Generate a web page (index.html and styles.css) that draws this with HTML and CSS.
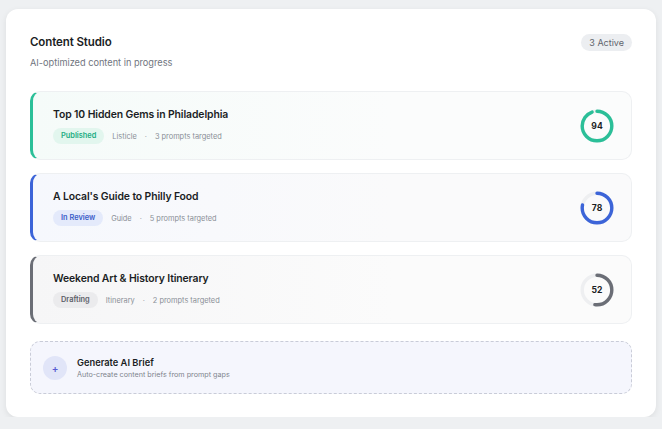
FILE: index.html
```html
<!DOCTYPE html>
<html>
<head>
    <title>Content Studio</title>
    <link rel="stylesheet" href="styles.css">
</head>
<body>
    <div class="card">
        <div class="card-head">
            <div>
                <div class="card-title">Content Studio</div>
                <div class="card-sub">AI-optimized content in progress</div>
            </div>
            <span class="active-pill">3 Active</span>
        </div>

        <div class="items">
            <div class="item item-green">
                <div class="item-body">
                    <div class="item-title">Top 10 Hidden Gems in Philadelphia</div>
                    <div class="item-meta">
                        <span class="status status-green">Published</span>
                        <span>Listicle</span>
                        <span class="dot">·</span>
                        <span>3 prompts targeted</span>
                    </div>
                </div>
                <div class="ring">
                    <svg width="34" height="34" viewBox="0 0 34 34">
                        <circle cx="17" cy="17" r="14.8" class="ring-track"/>
                        <circle cx="17" cy="17" r="14.8" class="ring-bar" stroke="#2bbf98" stroke-dasharray="87.4 93" transform="rotate(-90 17 17)"/>
                    </svg>
                    <span class="ring-num">94</span>
                </div>
            </div>

            <div class="item item-blue">
                <div class="item-body">
                    <div class="item-title">A Local's Guide to Philly Food</div>
                    <div class="item-meta">
                        <span class="status status-blue">In Review</span>
                        <span>Guide</span>
                        <span class="dot">·</span>
                        <span>5 prompts targeted</span>
                    </div>
                </div>
                <div class="ring">
                    <svg width="34" height="34" viewBox="0 0 34 34">
                        <circle cx="17" cy="17" r="14.8" class="ring-track"/>
                        <circle cx="17" cy="17" r="14.8" class="ring-bar" stroke="#3c64d8" stroke-dasharray="72.5 93" transform="rotate(-90 17 17)"/>
                    </svg>
                    <span class="ring-num">78</span>
                </div>
            </div>

            <div class="item item-gray">
                <div class="item-body">
                    <div class="item-title">Weekend Art &amp; History Itinerary</div>
                    <div class="item-meta">
                        <span class="status status-gray">Drafting</span>
                        <span>Itinerary</span>
                        <span class="dot">·</span>
                        <span>2 prompts targeted</span>
                    </div>
                </div>
                <div class="ring">
                    <svg width="34" height="34" viewBox="0 0 34 34">
                        <circle cx="17" cy="17" r="14.8" class="ring-track"/>
                        <circle cx="17" cy="17" r="14.8" class="ring-bar" stroke="#6b6e76" stroke-dasharray="48.4 93" transform="rotate(-90 17 17)"/>
                    </svg>
                    <span class="ring-num">52</span>
                </div>
            </div>
        </div>

        <div class="generate">
            <div class="gen-icon">+</div>
            <div>
                <div class="gen-title">Generate AI Brief</div>
                <div class="gen-sub">Auto-create content briefs from prompt gaps</div>
            </div>
        </div>
    </div>
</body>
</html>
```

FILE: styles.css
```css
body {
    margin: 0;
    padding: 9px 6px 0 6px;
    background-color: #eef0f2;
    font-family: Inter, "Noto Sans", sans-serif;
    color: #1b1e24;
}

.card {
    width: 650px;
    height: 408px;
    box-sizing: border-box;
    background-color: #fff;
    border-radius: 12px;
    padding: 24px 24px 23px 24px;
    box-shadow: 0 2px 6px rgba(0, 0, 0, 0.08);
}

.card-head {
    display: flex;
    justify-content: space-between;
    align-items: flex-start;
}

.card-title {
    font-size: 11.5px;
    font-weight: 600;
    line-height: 18px;
    letter-spacing: -0.1px;
}

.card-sub {
    margin-top: 4px;
    font-size: 9.2px;
    line-height: 16px;
    color: #70757e;
}

.active-pill {
    margin-top: 1px;
    background-color: #eceef1;
    color: #5f646c;
    font-size: 9px;
    line-height: 17px;
    padding: 0 8px;
    border-radius: 9px;
}

.items {
    margin-top: 20px;
    display: flex;
    flex-direction: column;
    gap: 13px;
}

.item {
    height: 69px;
    box-sizing: border-box;
    display: flex;
    align-items: center;
    justify-content: space-between;
    padding: 0 17px 0 20px;
    border: 1px solid #eef0f2;
    border-left: 3px solid;
    border-radius: 10px;
}

.item-green {
    border-left-color: #2bbf98;
    background: linear-gradient(90deg, #f5fbf9, #fbfcfc 60%);
}

.item-blue {
    border-left-color: #3c64d8;
    background: linear-gradient(90deg, #f6f8fd, #fafafb 60%);
}

.item-gray {
    border-left-color: #6b6e76;
    background: linear-gradient(90deg, #f6f6f7, #fbfbfb 60%);
}

.item-title {
    font-size: 10.4px;
    font-weight: 600;
    line-height: 16px;
    letter-spacing: -0.1px;
}

.item-meta {
    margin-top: 5px;
    display: flex;
    align-items: center;
    gap: 8px;
    font-size: 7.4px;
    color: #8a8f97;
}

.item-meta .dot {
    color: #a0a4ab;
}

.status {
    font-weight: 600;
    font-size: 7.4px;
    line-height: 16px;
    padding: 0 8px;
    border-radius: 8px;
}

.status-green {
    background-color: #e2f6ee;
    color: #22ad83;
}

.status-blue {
    background-color: #e4eafb;
    color: #3a5cc9;
}

.status-gray {
    background-color: #ebebed;
    color: #5c6068;
}

.ring {
    position: relative;
    width: 34px;
    height: 34px;
}

.ring svg {
    display: block;
}

.ring-track {
    fill: none;
    stroke: #eeeff1;
    stroke-width: 3.4;
}

.ring-bar {
    fill: none;
    stroke-width: 3.4;
    stroke-linecap: round;
}

.ring-num {
    position: absolute;
    top: 0;
    left: 0;
    width: 34px;
    line-height: 34px;
    text-align: center;
    font-size: 8.6px;
    font-weight: 700;
}

.generate {
    margin-top: 17px;
    height: 53px;
    box-sizing: border-box;
    display: flex;
    align-items: center;
    gap: 10px;
    padding-left: 12px;
    border: 1px dashed #c9ccd8;
    border-radius: 10px;
    background-color: #f5f6fd;
}

.gen-icon {
    width: 24px;
    height: 24px;
    border-radius: 50%;
    background-color: #e1e5f8;
    color: #5a5bd3;
    font-size: 10px;
    font-weight: 600;
    line-height: 24px;
    text-align: center;
}

.gen-title {
    font-size: 9.3px;
    font-weight: 600;
    line-height: 13px;
}

.gen-sub {
    margin-top: 1px;
    font-size: 7.2px;
    color: #80858d;
}
```
